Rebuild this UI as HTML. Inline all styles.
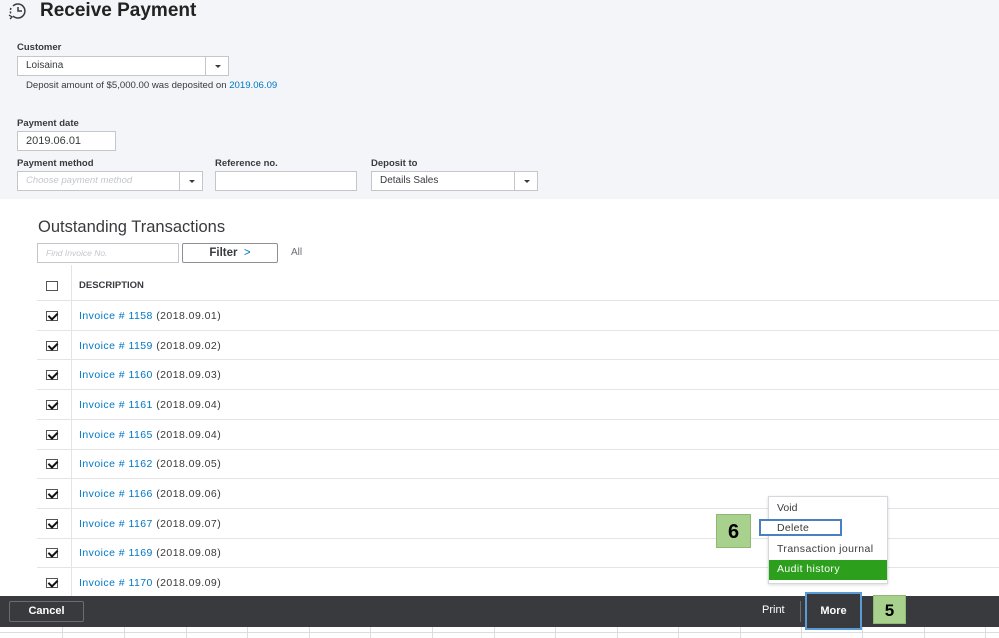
<!DOCTYPE html>
<html><head><meta charset="utf-8"><style>
*{margin:0;padding:0;box-sizing:border-box}
body{width:999px;height:638px;position:relative;overflow:hidden;background:#fff;font-family:"Liberation Sans",sans-serif;color:#393a3d}
.a{position:absolute;white-space:nowrap}
.top{left:0;top:0;width:999px;height:199px;background:#f4f5f8}
.lbl{font-size:9.5px;font-weight:bold;color:#393a3d}
.inp{background:#fff;border:1px solid #c4c6cb;font-size:10px;padding-left:8px;line-height:18px}
.dd{position:absolute;right:0;top:0;height:100%;width:23px;border-left:1px solid #c4c6cb}
.dd:after{content:"";position:absolute;left:9px;top:8px;border:3px solid transparent;border-top:3px solid #393a3d}
.sep{left:37px;width:962px;height:1px;background:#e4e4e6}
.cb{left:46px;width:12px;height:10px;border:1px solid #555;background:#fff}
.cb:after{content:"";position:absolute;left:3px;top:-1px;width:4px;height:7px;border:solid #111;border-width:0 2px 2px 0;transform:rotate(45deg)}
.row{left:79px;font-size:10.5px;color:#393a3d;letter-spacing:.45px}
.row b{font-weight:normal;color:#0077c5}
.gv{top:627px;width:1px;height:11px;background:#ddd}
</style></head><body>
<div class="a top"></div>
<svg class="a" style="left:7px;top:2px" width="22" height="18" viewBox="0 0 22 18"><path d="M6 4 A7 7 0 1 1 6 14" fill="none" stroke="#393a3d" stroke-width="1.5"/><path d="M4 6 A7 7 0 0 0 4 12" fill="none" stroke="#393a3d" stroke-width="1.5" stroke-dasharray="2 1.5"/><path d="M11 5 V9 H15" fill="none" stroke="#393a3d" stroke-width="1.5"/><path d="M2 13 L5 15 L3 17" fill="none" stroke="#393a3d" stroke-width="1.3"/></svg>
<div class="a" style="left:40px;top:0px;font-size:19px;font-weight:bold;color:#222">Receive Payment</div>
<div class="a lbl" style="left:17px;top:42px">Customer</div>
<div class="a inp" style="left:17px;top:56px;width:212px;height:20px">Loisaina<div class="dd"></div></div>
<div class="a" style="left:26px;top:80px;font-size:9.6px">Deposit amount of $5,000.00 was deposited on <span style="color:#0077c5">2019.06.09</span></div>
<div class="a lbl" style="left:17px;top:118px">Payment date</div>
<div class="a inp" style="left:17px;top:131px;width:99px;height:20px;font-size:11px">2019.06.01</div>
<div class="a lbl" style="left:17px;top:158px">Payment method</div>
<div class="a inp" style="left:17px;top:171px;width:186px;height:20px;color:#c4c6cb;font-style:italic;font-size:9.5px">Choose payment method<div class="dd"></div></div>
<div class="a lbl" style="left:215px;top:158px">Reference no.</div>
<div class="a inp" style="left:215px;top:171px;width:142px;height:20px"></div>
<div class="a lbl" style="left:371px;top:158px">Deposit to</div>
<div class="a inp" style="left:371px;top:171px;width:167px;height:20px">Details Sales<div class="dd"></div></div>
<div class="a" style="left:38px;top:218px;font-size:16.5px;color:#393a3d">Outstanding Transactions</div>
<div class="a inp" style="left:37px;top:243px;width:142px;height:20px;color:#c4c6cb;font-style:italic;font-size:8.5px">Find Invoice No.</div>
<div class="a" style="left:182px;top:243px;width:96px;height:20px;border:1px solid #8d9096;border-radius:2px;background:#fff;font-size:11.5px;font-weight:bold;text-align:center;line-height:18px">Filter <span style="color:#0077c5;font-weight:normal">&nbsp;&gt;</span></div>
<div class="a" style="left:291px;top:247px;font-size:10px;color:#6b6c72">All</div>
<div class="a" style="left:71px;top:265px;width:1px;height:331px;background:#e4e4e6"></div>
<div class="a" style="left:46px;top:281px;width:12px;height:10px;border:1px solid #555;background:#fff"></div>
<div class="a" style="left:79px;top:280px;font-size:9.5px;font-weight:bold">DESCRIPTION</div>
<div class="a sep" style="top:300px"></div>
<div class="a cb" style="top:311px"></div><div class="a row" style="top:310px"><b>Invoice # 1158</b> (2018.09.01)</div>
<div class="a sep" style="top:330px"></div>
<div class="a cb" style="top:341px"></div><div class="a row" style="top:340px"><b>Invoice # 1159</b> (2018.09.02)</div>
<div class="a sep" style="top:359px"></div>
<div class="a cb" style="top:370px"></div><div class="a row" style="top:369px"><b>Invoice # 1160</b> (2018.09.03)</div>
<div class="a sep" style="top:389px"></div>
<div class="a cb" style="top:400px"></div><div class="a row" style="top:399px"><b>Invoice # 1161</b> (2018.09.04)</div>
<div class="a sep" style="top:419px"></div>
<div class="a cb" style="top:430px"></div><div class="a row" style="top:429px"><b>Invoice # 1165</b> (2018.09.04)</div>
<div class="a sep" style="top:449px"></div>
<div class="a cb" style="top:459px"></div><div class="a row" style="top:458px"><b>Invoice # 1162</b> (2018.09.05)</div>
<div class="a sep" style="top:478px"></div>
<div class="a cb" style="top:489px"></div><div class="a row" style="top:488px"><b>Invoice # 1166</b> (2018.09.06)</div>
<div class="a sep" style="top:508px"></div>
<div class="a cb" style="top:519px"></div><div class="a row" style="top:518px"><b>Invoice # 1167</b> (2018.09.07)</div>
<div class="a sep" style="top:538px"></div>
<div class="a cb" style="top:548px"></div><div class="a row" style="top:547px"><b>Invoice # 1169</b> (2018.09.08)</div>
<div class="a sep" style="top:567px"></div>
<div class="a cb" style="top:578px"></div><div class="a row" style="top:577px"><b>Invoice # 1170</b> (2018.09.09)</div>
<!-- menu -->
<div class="a" style="left:768px;top:496px;width:120px;height:88px;background:#fff;border:1px solid #d4d7dc;box-shadow:0 1px 3px rgba(0,0,0,.15)"></div>
<div class="a" style="left:777px;top:502px;font-size:10.5px">Void</div>
<div class="a" style="left:759px;top:519px;width:83px;height:17px;border:2px solid #4a7fc0;background:#fff"></div>
<div class="a" style="left:777px;top:522px;font-size:10.5px;letter-spacing:.3px">Delete</div>
<div class="a" style="left:777px;top:543px;font-size:10.5px;letter-spacing:.4px">Transaction journal</div>
<div class="a" style="left:769px;top:560px;width:118px;height:20px;background:#2ca01c"></div>
<div class="a" style="left:777px;top:563px;font-size:10.5px;color:#fff;letter-spacing:.4px">Audit history</div>
<div class="a" style="left:716px;top:514px;width:35px;height:34px;background:#a9d18e;border:1px solid #8fb870;font-size:20px;font-weight:bold;text-align:center;line-height:34px;color:#000">6</div>
<!-- bar -->
<div class="a" style="left:0;top:596px;width:999px;height:31px;background:#393a3d"></div>
<div class="a" style="left:9px;top:601px;width:75px;height:21px;border:1px solid #6b6c72;border-radius:2px;color:#fff;font-size:11px;font-weight:bold;text-align:center;line-height:19px">Cancel</div>
<div class="a" style="left:762px;top:604px;font-size:11px;color:#fff">Print</div>
<div class="a" style="left:800px;top:601px;width:1px;height:21px;background:#6b6c72"></div>
<div class="a" style="left:805px;top:592px;width:57px;height:38px;border:2px solid #5b9bd5;background:#393a3d;color:#fff;font-size:11px;font-weight:bold;text-align:center;line-height:34px">More</div>
<div class="a" style="left:873px;top:595px;width:33px;height:29px;background:#a9d18e;border:1px solid #8fb870;font-size:17px;font-weight:bold;text-align:center;line-height:29px;color:#000">5</div>
<div class="a" style="left:0;top:632px;width:999px;height:1px;background:#ddd"></div>
<div class="a gv" style="left:62px"></div><div class="a gv" style="left:124px"></div><div class="a gv" style="left:186px"></div><div class="a gv" style="left:247px"></div><div class="a gv" style="left:309px"></div><div class="a gv" style="left:370px"></div><div class="a gv" style="left:432px"></div><div class="a gv" style="left:494px"></div><div class="a gv" style="left:555px"></div><div class="a gv" style="left:617px"></div><div class="a gv" style="left:678px"></div><div class="a gv" style="left:740px"></div><div class="a gv" style="left:801px"></div><div class="a gv" style="left:862px"></div><div class="a gv" style="left:924px"></div><div class="a gv" style="left:985px"></div>
</body></html>
